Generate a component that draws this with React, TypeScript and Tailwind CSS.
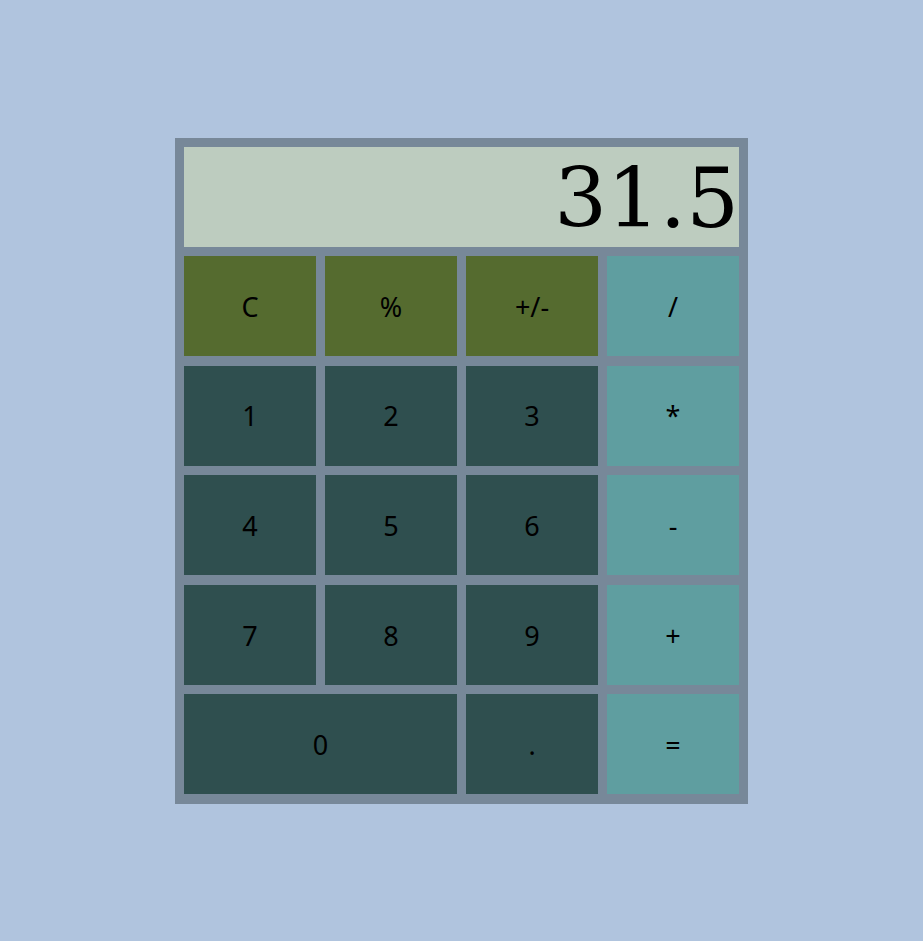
export default function App() {
  const rows: { label: string; kind: "fn" | "num" | "op"; wide?: boolean }[] = [
    { label: "C", kind: "fn" },
    { label: "%", kind: "fn" },
    { label: "+/-", kind: "fn" },
    { label: "/", kind: "op" },
    { label: "1", kind: "num" },
    { label: "2", kind: "num" },
    { label: "3", kind: "num" },
    { label: "*", kind: "op" },
    { label: "4", kind: "num" },
    { label: "5", kind: "num" },
    { label: "6", kind: "num" },
    { label: "-", kind: "op" },
    { label: "7", kind: "num" },
    { label: "8", kind: "num" },
    { label: "9", kind: "num" },
    { label: "+", kind: "op" },
    { label: "0", kind: "num", wide: true },
    { label: ".", kind: "num" },
    { label: "=", kind: "op" },
  ];

  const bg = {
    fn: "bg-[#556b2f]",
    num: "bg-[#2f4f4f]",
    op: "bg-[#5f9ea0]",
  };

  return (
    <div className="min-h-[941px] w-full bg-[#b0c4de] flex justify-center pt-[138px]">
      <div className="w-[573px] h-[666px] bg-[#778899] pt-[9px] px-[9px] pb-[10px] flex flex-col gap-y-[9px]">
        {/* Display */}
        <div
          className="h-[100px] shrink-0 bg-[#bdccbf] flex items-center justify-end text-black text-[83px] leading-none pt-[2px]"
          style={{ fontFamily: "'DejaVu Serif', serif" }}
        >
          31.5
        </div>

        {/* Keys */}
        <div className="grid grid-cols-4 gap-x-[9px] gap-y-[9.6px] auto-rows-[100px]">
          {rows.map((k) => (
            <button
              key={k.label}
              className={`${bg[k.kind]} ${k.wide ? "col-span-2" : ""} flex items-center justify-center text-black text-[27px] pt-[2px]`}
              style={{ fontFamily: "'Noto Sans', sans-serif" }}
            >
              {k.label}
            </button>
          ))}
        </div>
      </div>
    </div>
  );
}
